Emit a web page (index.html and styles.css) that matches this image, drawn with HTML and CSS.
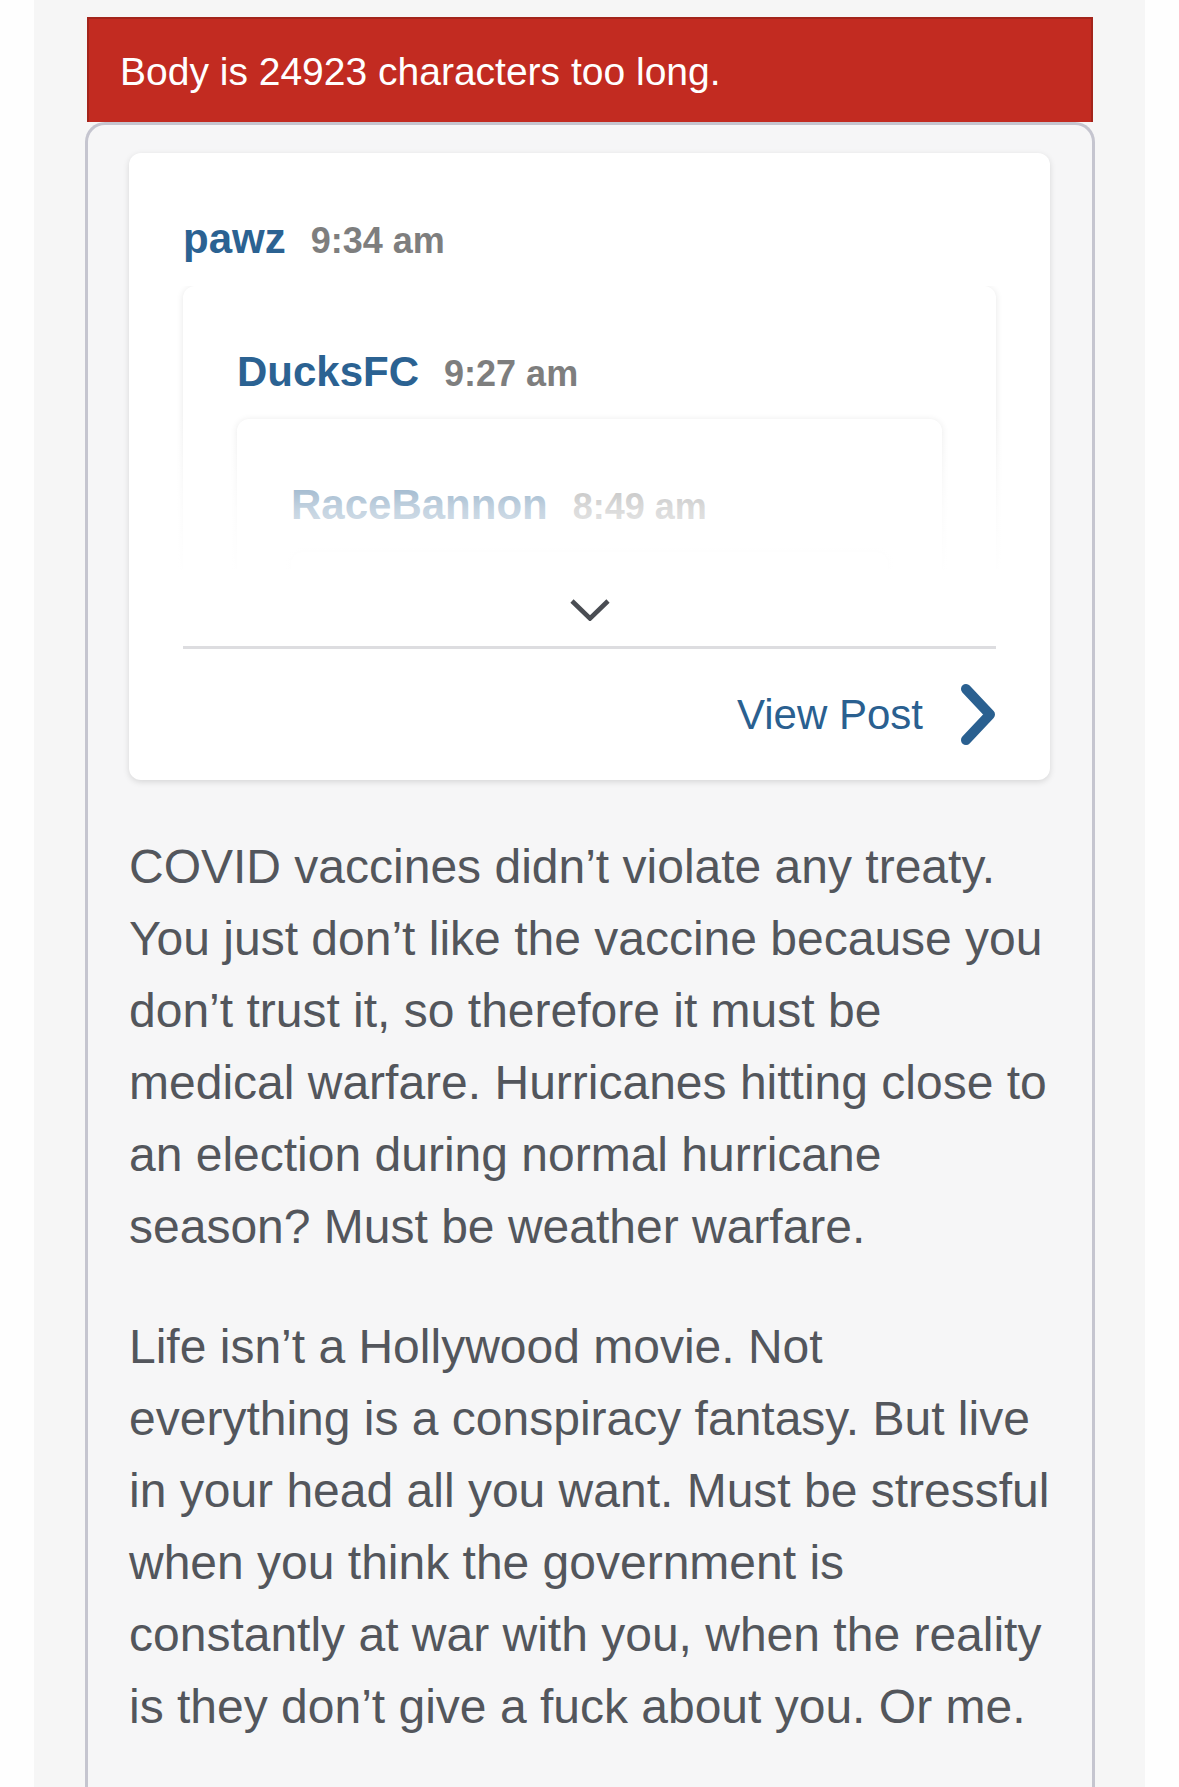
FILE: index.html
```html
<!DOCTYPE html>
<html lang="en">
<head>
<meta charset="utf-8">
<title>Reply</title>
<link rel="stylesheet" href="styles.css">
</head>
<body>
<div class="page">
  <div class="banner">Body is 24923 characters too long.</div>
  <div class="editor">
    <div class="quote-card">
      <div class="quote-head"><span class="user">pawz</span><span class="time">9:34 am</span></div>
      <div class="nested-wrap">
        <div class="nest">
          <div class="quote-head"><span class="user">DucksFC</span><span class="time">9:27 am</span></div>
          <div class="nest">
            <div class="quote-head"><span class="user">RaceBannon</span><span class="time">8:49 am</span></div>
            <div class="nest nest-empty"></div>
          </div>
        </div>
        <div class="fade"></div>
      </div>
      <div class="expand">
        <svg width="40" height="22" viewBox="0 0 40 22" aria-hidden="true"><polyline points="2,2 20,19.5 38,2" fill="none" stroke="#4a4d53" stroke-width="4.6"/></svg>
      </div>
      <div class="divider"></div>
      <div class="footer">
        <span class="view-post">View Post</span>
        <svg width="36" height="63" viewBox="0 0 36 63" aria-hidden="true"><polyline points="6,6 30,31.5 6,57" fill="none" stroke="#2a6090" stroke-width="10" stroke-linecap="round" stroke-linejoin="round"/></svg>
      </div>
    </div>
    <div class="body-text">
      <p>COVID vaccines didn’t violate any treaty. You just don’t like the vaccine because you don’t trust it, so therefore it must be medical warfare. Hurricanes hitting close to an election during normal hurricane season? Must be weather warfare.</p>
      <p>Life isn’t a Hollywood movie. Not everything is a conspiracy fantasy. But live in your head all you want. Must be stressful when you think the government is constantly at war with you, when the reality is they don’t give a fuck about you. Or me.</p>
    </div>
  </div>
</div>
</body>
</html>
```
FILE: styles.css
```css
html, body {
  margin: 0;
  padding: 0;
  background: #fefefe;
}

body {
  font-family: "Liberation Sans", Arial, Helvetica, sans-serif;
}

.page {
  margin: 0 34px;
  background: #f6f6f6;
  padding: 17px 50px 0 51px;
  min-height: 1787px;
  box-sizing: border-box;
  display: flex;
  flex-direction: column;
}

.banner {
  margin: 0 2px;
  background: #c22b21;
  border: 2px solid #a3241b;
  border-bottom: none;
  color: #ffffff;
  font-size: 39px;
  line-height: 45px;
  padding: 30px 30px 28px 31px;
}

.editor {
  flex: 1;
  border: 3px solid #c5c5cf;
  border-bottom: none;
  border-radius: 20px 20px 0 0;
  padding: 28px 42px 40px 41px;
  background: #f6f6f7;
}

.quote-card {
  background: #ffffff;
  border-radius: 12px;
  box-shadow: 0 2px 6px rgba(0, 0, 0, 0.13);
  padding: 0 54px;
}

.quote-head {
  display: flex;
  align-items: baseline;
  gap: 25px;
  padding-top: 54px;
  line-height: 63px;
}

.user {
  font-size: 42px;
  font-weight: bold;
  color: #2b6292;
  line-height: 63px;
}

.time {
  font-size: 36px;
  font-weight: bold;
  color: #7e7e7e;
  line-height: 54px;
}

.nested-wrap {
  position: relative;
  height: 284px;
  overflow: hidden;
  margin: 16px -20px 0;
  padding: 0 20px;
}

.nest {
  background: #ffffff;
  border-radius: 12px;
  box-shadow: 0 1px 7px rgba(0, 0, 0, 0.1);
  padding: 0 54px 40px;
  margin-top: 16px;
}

.nested-wrap > .nest {
  margin-top: 0;
}

.nest-empty {
  height: 120px;
}

.fade {
  position: absolute;
  left: 0;
  right: 0;
  bottom: 0;
  height: 160px;
  background: linear-gradient(to bottom, rgba(255, 255, 255, 0) 0%, rgba(255, 255, 255, 0.72) 62%, rgba(255, 255, 255, 0.96) 100%);
}

.expand {
  height: 76px;
  display: flex;
  align-items: center;
  justify-content: center;
}

.expand svg {
  display: block;
  margin-top: 4px;
}

.divider {
  height: 3px;
  background: #dddde0;
}

.footer {
  height: 131px;
  display: flex;
  align-items: center;
  justify-content: flex-end;
  gap: 37px;
}

.footer svg {
  display: block;
}

.view-post {
  font-size: 42px;
  line-height: 63px;
  color: #2a6090;
}

.body-text {
  padding-top: 51px;
  margin-right: -6px;
  font-size: 48px;
  line-height: 72px;
  color: #53565c;
}

.body-text p {
  margin: 0 0 48px;
}
```
